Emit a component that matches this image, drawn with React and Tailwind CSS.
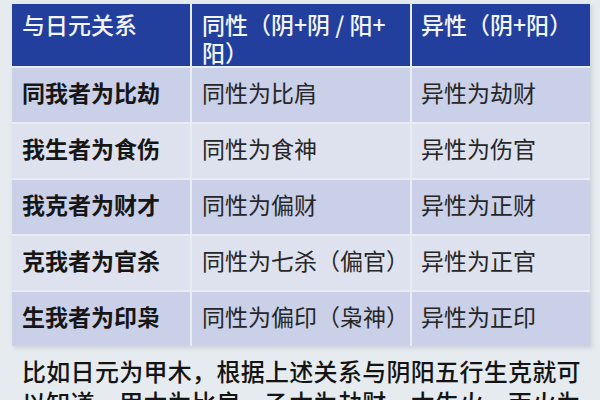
const rows = [
  ["同我者为比劫", "同性为比肩", "异性为劫财"],
  ["我生者为食伤", "同性为食神", "异性为伤官"],
  ["我克者为财才", "同性为偏财", "异性为正财"],
  ["克我者为官杀", "同性为七杀（偏官）", "异性为正官"],
  ["生我者为印枭", "同性为偏印（枭神）", "异性为正印"],
];

const App = () => {
  return (
    <div
      className="w-[600px] h-[400px] overflow-hidden bg-[#e5ebef] pt-[4px] pl-[12px]"
      style={{ fontFamily: '"Noto Sans CJK SC", "Noto Sans", sans-serif' }}
    >
      <div className="w-[578px] grid grid-cols-[178px_218px_178px] gap-x-[2px] gap-y-[2px] bg-[#e8ecf3] shadow-[2px_2px_4px_rgba(120,130,160,0.25)]">
        <div className="h-[62px] bg-[#223f9e] text-[#f3f5fc] text-[23px] leading-[28px] font-medium pt-[6px] pl-[10px]">
          与日元关系
        </div>
        <div className="h-[62px] bg-[#223f9e] text-[#f3f5fc] text-[23px] leading-[28px] font-medium pt-[6px] pl-[10px] whitespace-nowrap">
          同性（阴+阴 / 阳+
          <br />
          阳）
        </div>
        <div className="h-[62px] bg-[#223f9e] text-[#f3f5fc] text-[23px] leading-[28px] font-medium pt-[6px] pl-[9px]">
          异性（阴+阳）
        </div>
        {rows.map((r, i) => {
          const bg = i % 2 === 0 ? "bg-[#c9d0e7]" : "bg-[#dde2ee]";
          return [
            <div
              key={i + "a"}
              className={`h-[54px] ${bg} text-[23px] leading-[28px] font-bold text-[#161616] pt-[10px] pl-[10px] whitespace-nowrap`}
            >
              {r[0]}
            </div>,
            <div
              key={i + "b"}
              className={`h-[54px] ${bg} text-[23px] leading-[28px] text-[#262626] pt-[10px] pl-[10px] whitespace-nowrap`}
            >
              {r[1]}
            </div>,
            <div
              key={i + "c"}
              className={`h-[54px] ${bg} text-[23px] leading-[28px] text-[#262626] pt-[10px] pl-[9px] whitespace-nowrap`}
            >
              {r[2]}
            </div>,
          ];
        })}
      </div>
      <p className="mt-[9px] pl-[10px] w-[584px] text-[24px] leading-[31px] tracking-[0.3px] text-[#141414] font-medium">
        比如日元为甲木，根据上述关系与阴阳五行生克就可以知道，甲木为比肩，乙木为劫财，木生火，丙火为食神，丁火为伤官。
      </p>
    </div>
  );
};

export default App;
